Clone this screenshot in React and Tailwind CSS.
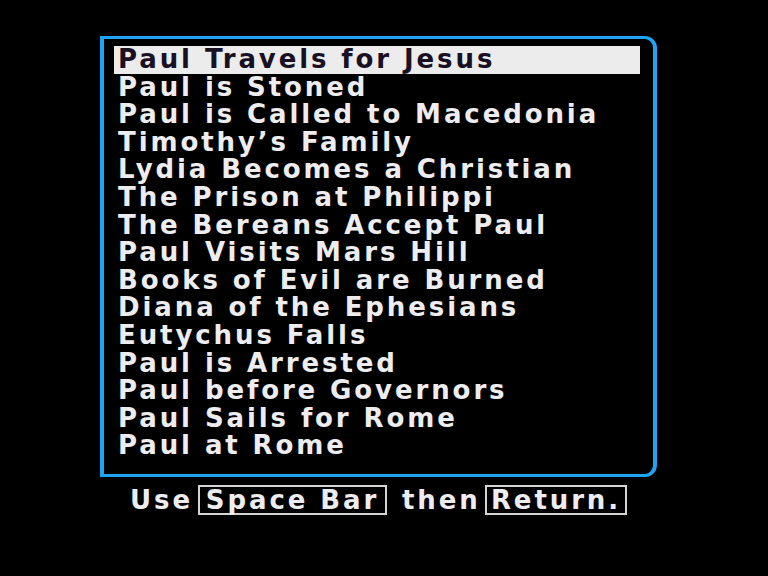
import React from "react";

const items = [
  "Paul Travels for Jesus",
  "Paul is Stoned",
  "Paul is Called to Macedonia",
  "Timothy\u2019s Family",
  "Lydia Becomes a Christian",
  "The Prison at Philippi",
  "The Bereans Accept Paul",
  "Paul Visits Mars Hill",
  "Books of Evil are Burned",
  "Diana of the Ephesians",
  "Eutychus Falls",
  "Paul is Arrested",
  "Paul before Governors",
  "Paul Sails for Rome",
  "Paul at Rome",
];

export default function App() {
  return (
    <div
      className="w-[768px] h-[576px] bg-black overflow-hidden flex flex-col text-[26px] tracking-[2.9px] font-bold text-[#ededf0]"
      style={{ fontFamily: '"DejaVu Sans", Verdana, sans-serif' }}
    >
      <div className="ml-[100px] mt-[36px] w-[557px] h-[441px] border-[3px] border-l-4 border-r-4 border-[#1ea4f4] rounded-tr-[12px] rounded-br-[12px] pt-[7px] pl-[10px] pr-[13px]">
        {items.map((t, i) => (
          <div
            key={t}
            className={
              "h-[27.6px] leading-[27.6px] pl-[4px] whitespace-nowrap " +
              (i === 0 ? "bg-[#ececec] text-[#1a1024]" : "")
            }
          >
            {t}
          </div>
        ))}
      </div>
      <div className="mt-[8px] pl-[130px] flex items-center h-[30px] leading-[28px] whitespace-nowrap">
        <span className="w-[68px]">Use</span>
        <span className="w-[189px] border-2 border-[#d4d4d4] h-[30px] flex items-center justify-center">Space Bar</span>
        <span className="w-[98px] pl-[15px]">then</span>
        <span className="w-[142px] border-2 border-[#d4d4d4] h-[30px] flex items-center justify-center">Return.</span>
      </div>
    </div>
  );
}
